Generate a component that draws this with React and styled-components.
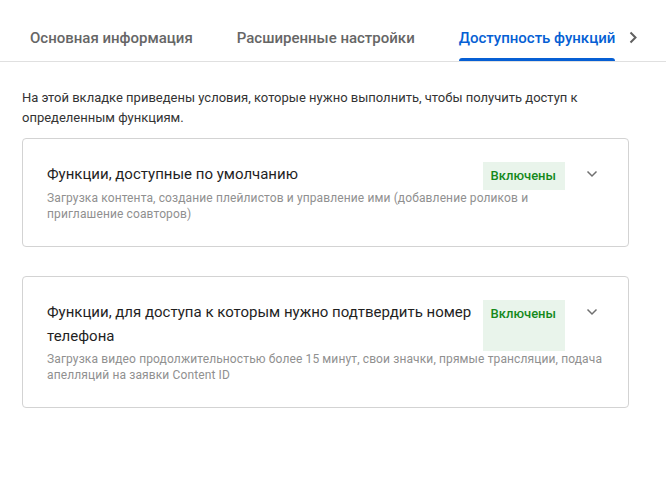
import styled, { createGlobalStyle } from "styled-components";

const GlobalStyle = createGlobalStyle`
  body {
    margin: 0;
    background: #fff;
    font-family: Roboto, "Noto Sans", Arial, sans-serif;
  }
`;

const Page = styled.div`
  width: 666px;
  min-height: 499px;
  background: #fff;
`;

const TabBar = styled.div`
  display: flex;
  align-items: stretch;
  height: 61px;
  padding-left: 30px;
  border-bottom: 1px solid #e0e0e0;
  box-sizing: content-box;
`;

const Tabs = styled.div`
  display: flex;
  gap: 44px;
`;

const Tab = styled.div`
  position: relative;
  display: flex;
  align-items: center;
  padding-top: 14px;
  height: 47px;
  font-size: 15px;
  font-weight: 500;
  white-space: nowrap;
  color: ${(p) => (p.$active ? "#065fd4" : "#666")};

  &::after {
    content: "";
    display: ${(p) => (p.$active ? "block" : "none")};
    position: absolute;
    left: 0;
    right: 0;
    bottom: 0;
    height: 3px;
    border-radius: 3px 3px 0 0;
    background: #065fd4;
  }
`;

const ScrollArrow = styled.div`
  display: flex;
  align-items: center;
  padding: 14px 0 0 14px;
  color: #606060;
`;

const Content = styled.div`
  padding: 26px 37px 0 22px;
`;

const Intro = styled.p`
  margin: 0 0 10px;
  font-size: 13px;
  line-height: 20px;
  color: #333;
`;

const Card = styled.div`
  border: 1px solid #d3d3d3;
  border-radius: 4px;
  padding: 23px 24px 24px;
  margin-bottom: 29px;
`;

const Header = styled.div`
  display: flex;
  align-items: stretch;
`;

const Title = styled.div`
  flex: 1;
  font-size: 15px;
  line-height: 24px;
  color: #1f1f1f;
  padding-bottom: 3px;
  padding-right: 6px;
`;

const Badge = styled.div`
  display: flex;
  align-items: flex-start;
  padding: 6px 9px 6px 8px;
  font-size: 13px;
  line-height: 16px;
  font-weight: 500;
  color: #15891c;
  background: #e9f4eb;
  white-space: nowrap;
`;

const Toggle = styled.div`
  width: 24px;
  margin-left: 15px;
  display: flex;
  justify-content: center;
  padding-top: 8px;
  color: #707070;
`;

const Sub = styled.div`
  font-size: 12px;
  line-height: 16px;
  letter-spacing: 0.12px;
  color: #909090;
`;

const Chevron = ({ dir = "down" }) =>
  dir === "down" ? (
    <svg width="12" height="8" viewBox="0 0 12 8">
      <polyline points="1.5,1.5 6,6 10.5,1.5" fill="none" stroke="currentColor" strokeWidth="1.5" />
    </svg>
  ) : (
    <svg width="8" height="13" viewBox="0 0 8 13">
      <polyline points="1.5,1.5 6.5,6.5 1.5,11.5" fill="none" stroke="currentColor" strokeWidth="2" />
    </svg>
  );

const features = [
  {
    title: "Функции, доступные по умолчанию",
    desc: "Загрузка контента, создание плейлистов и управление ими (добавление роликов и приглашение соавторов)",
  },
  {
    title: "Функции, для доступа к которым нужно подтвердить номер телефона",
    desc: "Загрузка видео продолжительностью более 15 минут, свои значки, прямые трансляции, подача апелляций на заявки Content ID",
  },
];

export default function App() {
  return (
    <Page>
      <GlobalStyle />
      <TabBar>
        <Tabs>
          <Tab>Основная информация</Tab>
          <Tab>Расширенные настройки</Tab>
          <Tab $active>Доступность функций</Tab>
        </Tabs>
        <ScrollArrow>
          <Chevron dir="right" />
        </ScrollArrow>
      </TabBar>
      <Content>
        <Intro>
          На этой вкладке приведены условия, которые нужно выполнить, чтобы получить доступ к
          определенным функциям.
        </Intro>
        {features.map((f) => (
          <Card key={f.title}>
            <Header>
              <Title>{f.title}</Title>
              <Badge>Включены</Badge>
              <Toggle>
                <Chevron />
              </Toggle>
            </Header>
            <Sub>{f.desc}</Sub>
          </Card>
        ))}
      </Content>
    </Page>
  );
}
